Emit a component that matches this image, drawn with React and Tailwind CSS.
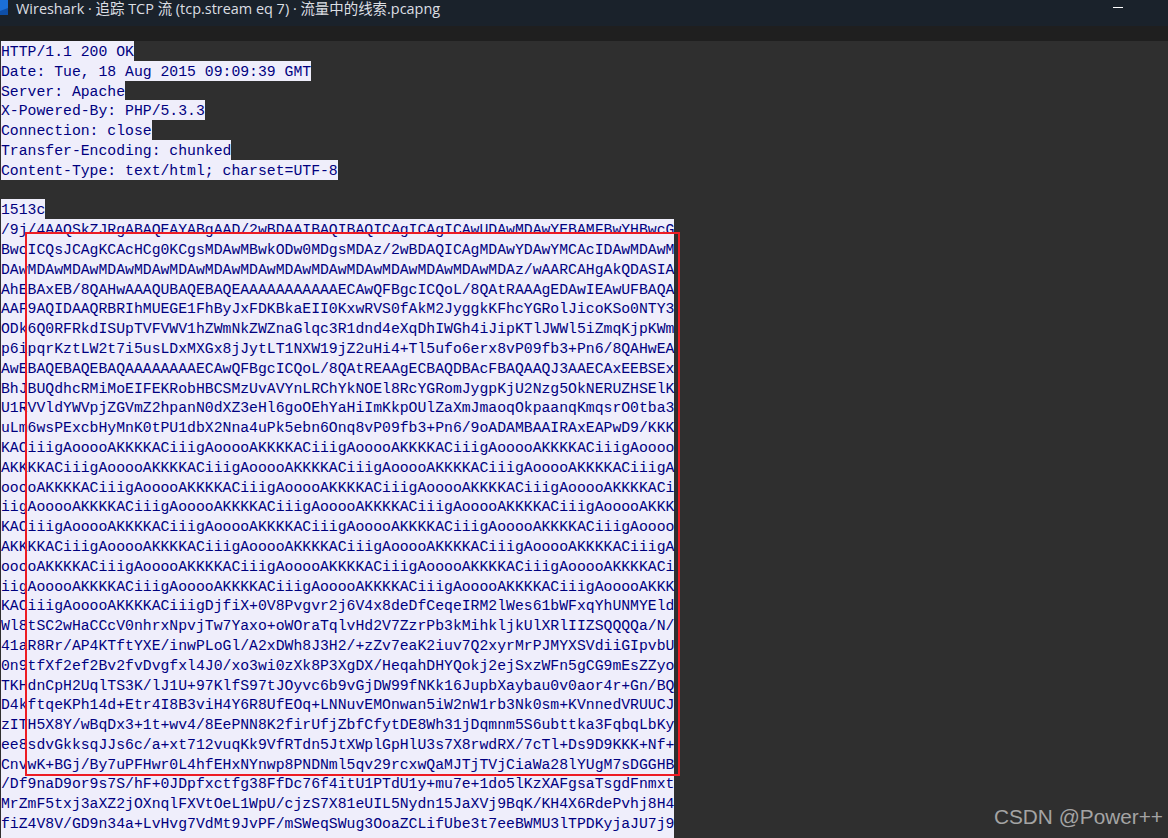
const HEADERS = [
  "HTTP/1.1 200 OK",
  "Date: Tue, 18 Aug 2015 09:09:39 GMT",
  "Server: Apache",
  "X-Powered-By: PHP/5.3.3",
  "Connection: close",
  "Transfer-Encoding: chunked",
  "Content-Type: text/html; charset=UTF-8",
  "",
  "1513c",
];

const A = "KACiiigAooooAKKKKACiiigAooooAKKKKACiiigAooooAKKKKACiiigAooooAKKKKACiiigAoooo";
const B = "AKKKKACiiigAooooAKKKKACiiigAooooAKKKKACiiigAooooAKKKKACiiigAooooAKKKKACiiigA";
const C = "ooooAKKKKACiiigAooooAKKKKACiiigAooooAKKKKACiiigAooooAKKKKACiiigAooooAKKKKACi";
const D = "iigAooooAKKKKACiiigAooooAKKKKACiiigAooooAKKKKACiiigAooooAKKKKACiiigAooooAKKK";

const BODY = [
  "/9j/4AAQSkZJRgABAQEAYABgAAD/2wBDAAIBAQIBAQICAgICAgICAwUDAwMDAwYEBAMFBwYHBwcG",
  "BwcICQsJCAgKCAcHCg0KCgsMDAwMBwkODw0MDgsMDAz/2wBDAQICAgMDAwYDAwYMCAcIDAwMDAwM",
  "DAwMDAwMDAwMDAwMDAwMDAwMDAwMDAwMDAwMDAwMDAwMDAwMDAwMDAwMDAz/wAARCAHgAkQDASIA",
  "AhEBAxEB/8QAHwAAAQUBAQEBAQEAAAAAAAAAAAECAwQFBgcICQoL/8QAtRAAAgEDAwIEAwUFBAQA",
  "AAF9AQIDAAQRBRIhMUEGE1FhByJxFDKBkaEII0KxwRVS0fAkM2JyggkKFhcYGRolJicoKSo0NTY3",
  "ODk6Q0RFRkdISUpTVFVWV1hZWmNkZWZnaGlqc3R1dnd4eXqDhIWGh4iJipKTlJWWl5iZmqKjpKWm",
  "p6ipqrKztLW2t7i5usLDxMXGx8jJytLT1NXW19jZ2uHi4+Tl5ufo6erx8vP09fb3+Pn6/8QAHwEA",
  "AwEBAQEBAQEBAQAAAAAAAAECAwQFBgcICQoL/8QAtREAAgECBAQDBAcFBAQAAQJ3AAECAxEEBSEx",
  "BhJBUQdhcRMiMoEIFEKRobHBCSMzUvAVYnLRChYkNOEl8RcYGRomJygpKjU2Nzg5OkNERUZHSElK",
  "U1RVVldYWVpjZGVmZ2hpanN0dXZ3eHl6goOEhYaHiImKkpOUlZaXmJmaoqOkpaanqKmqsrO0tba3",
  "uLm6wsPExcbHyMnK0tPU1dbX2Nna4uPk5ebn6Onq8vP09fb3+Pn6/9oADAMBAAIRAxEAPwD9/KKK",
  A, B, C, D, A, B, C, D,
  "KACiiigAooooAKKKKACiiigDjfiX+0V8Pvgvr2j6V4x8deDfCeqeIRM2lWes61bWFxqYhUNMYEld",
  "Wl8tSC2wHaCCcV0nhrxNpvjTw7Yaxo+oWOraTqlvHd2V7ZzrPb3kMihkljkUlXRlIIZSQQQQa/N/",
  "41aR8Rr/AP4KTftYXE/inwPLoGl/A2xDWh8J3H2/+zZv7eaK2iuv7Q2xyrMrPJMYXSVdiiGIpvbU",
  "0n9tfXf2ef2Bv2fvDvgfxl4J0/xo3wi0zXk8P3XgDX/HeqahDHYQokj2ejSxzWFn5gCG9mEsZZyo",
  "TKHdnCpH2UqlTS3K/lJ1U+97KlfS97tJOyvc6b9vGjDW99fNKk16JupbXaybau0v0aor4r+Gn/BQ",
  "D4kftqeKPh14d+Etr4I8B3viH4Y6R8UfEOq+LNNuvEMOnwan5iW2nW1rb3Nk0sm+KVnnedVRUUCJ",
  "zITH5X8Y/wBqDx3+1t+wv4/8EePNN8K2firUfjZbfCfytDE8Wh31jDqmnm5S6ubttka3FqbqLbKy",
  "ee8sdvGkksqJJs6c/a+xt712vuqKk9VfRTdn5JtXWplGpHlU3s7X8rwdRX/7cTl+Ds9D9KKK+Nf+",
  "CnvwK+BGj/By7uPFHwr0L4hfEHxNYnwp8PNDNml5qv29rcxwQaMJTjTVjCiaWa28lYUgM7sDGGHB",
  "/Df9naD9or9s7S/hF+0JDpfxctfg38FfDc76f4itU1PTdU1y+mu7e+1do5lKzXAFgsaTsgdFnmxt",
  "MrZmF5txj3aXZ2jOXnqlFXVtOeL1WpU/cjzS7X81eUIL5Nydn15JaXVj9BqK/KH4X6RdePvhj8H4",
  "fiZ4V8V/GD9n34a+LvHvg7VdMt9JvPF/mSWeqSWug3OoaZCLifUbe3t7eeBWMU3lTPDKyjaJU7j9",
];

function Line({ text }) {
  return (
    <div className="h-[19.8px] whitespace-pre">
      {text ? <span className="block h-[19.8px] w-fit bg-[#efeefb] leading-[23px]">{text}</span> : null}
    </div>
  );
}

export default function App() {
  return (
    <div className="relative flex h-[838px] w-[1168px] flex-col overflow-hidden bg-[#2f2f2f]">
      {/* Title bar */}
      <div className="flex h-[26px] shrink-0 items-start bg-[#1a222b]">
        <svg width="9" height="16" viewBox="0 0 9 16" className="shrink-0">
          <path d="M0 0H8V15H0Z" fill="#1b6fd6" />
          <path d="M0 11L8 8V15H0Z" fill="#0e4fa8" />
        </svg>
        <span className="ml-[7px] font-['Open_Sans','Noto_Sans_CJK_SC',sans-serif] text-[14.45px] leading-[17px] text-[#dcdfe3]">
          Wireshark · 追踪 TCP 流 (tcp.stream eq 7) · 流量中的线索.pcapng
        </span>
        <div className="ml-auto mr-[45px] mt-[7px] h-px w-[10px] bg-white" />
      </div>

      {/* Strip between title and text */}
      <div className="h-[15px] shrink-0 bg-[#1f1f1f]" />

      {/* Stream text */}
      <div className="pl-px font-['Liberation_Mono',monospace] text-[14.77px] text-[#00007f]">
        {HEADERS.map((text, i) => (
          <Line key={i} text={text} />
        ))}
        {BODY.map((text, i) => (
          <Line key={i} text={text} />
        ))}
        {/* next row is only just in frame, its selection shows but no glyphs */}
        <Line text={" ".repeat(76)} />
      </div>

      {/* Red annotation */}
      <div className="absolute left-[25px] top-[232px] h-[544px] w-[655px] border-[2.5px] border-[#ed1c24]" />

      {/* Watermark */}
      <div className="absolute right-[5px] top-[803px] font-['Liberation_Sans',sans-serif] text-[20.8px] leading-[28px] text-[#a4a4a4]">
        CSDN @Power++
      </div>
    </div>
  );
}
